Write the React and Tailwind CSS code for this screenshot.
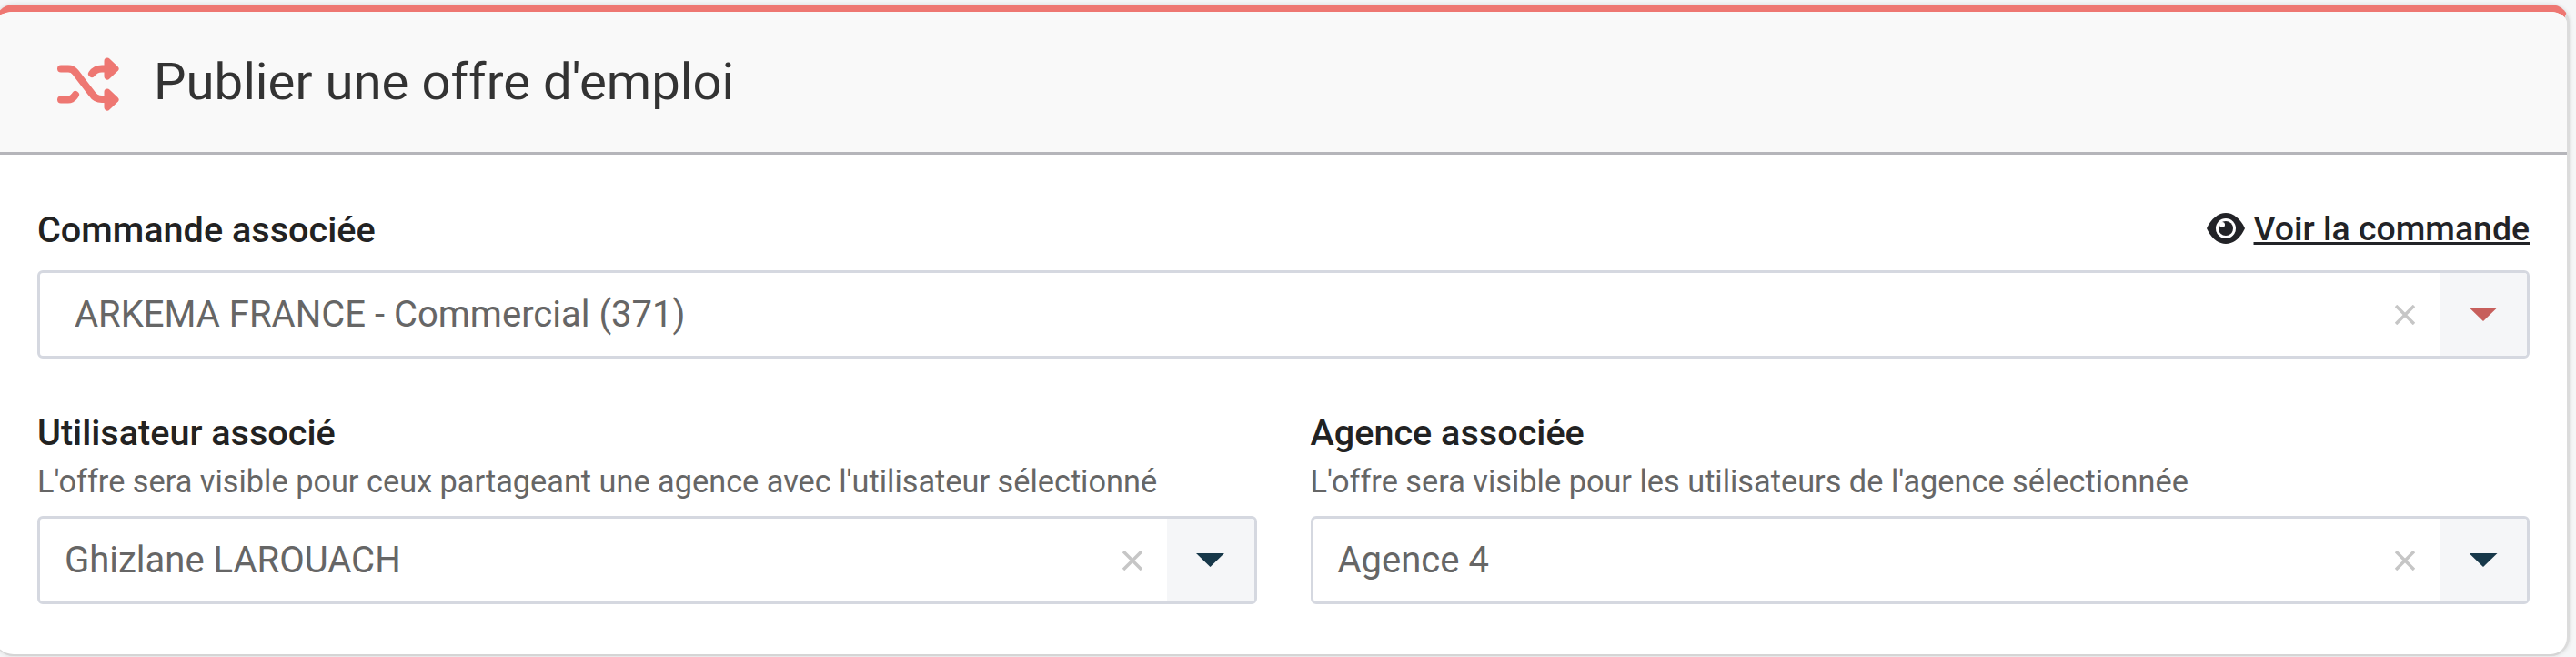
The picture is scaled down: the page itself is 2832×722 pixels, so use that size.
const ShuffleIcon = () => (
  <svg viewBox="32 17 72 66" className="w-[72px] h-[66px] shrink-0" fill="none" stroke="#ee7772" strokeWidth="8" strokeLinecap="round" strokeLinejoin="round">
    <path d="M37 35.5H45Q50 35.5 53 39.5L71 63Q75 69 82 69H88" />
    <path d="M37 69.500H45Q49 69.500 52 65.500L53 64" strokeLinecap="round" />
    <path d="M71 41Q75 35.500 82 35.500H88" />
    <path d="M88 27L97 35.500L88 44Z" fill="#ee7772" strokeWidth="7" />
    <path d="M88 61L97 69.500L88 78Z" fill="#ee7772" strokeWidth="7" />
  </svg>
);

const EyeIcon = () => (
  <svg viewBox="0 0 42 34" className="w-[42px] h-[34px] shrink-0">
    <path d="M0 17C5 6 13 0 21 0S37 6 42 17C37 28 29 34 21 34S5 28 0 17Z" fill="#222327" />
    <circle cx="21" cy="17" r="11" fill="#ffffff" />
    <circle cx="21" cy="17" r="8" fill="#222327" />
    <circle cx="17" cy="13" r="3" fill="#ffffff" />
  </svg>
);

const Select = ({ value, arrow = '#17384a', padText = 'pl-[38px]' }) => (
  <div className="flex h-[97px] border-[3px] border-[#d5d8e0] rounded-[6px] overflow-hidden bg-white">
    <div className={`flex-1 flex items-center ${padText} text-[40px] text-[#666666]`}>{value}</div>
    <div className="w-[78px] flex items-center justify-start pl-[29px]">
      <svg viewBox="0 0 22 22" className="w-[22px] h-[22px]" stroke="#c6c6c6" strokeWidth="3.5">
        <path d="M1 1L21 21M21 1L1 21" />
      </svg>
    </div>
    <div className="w-[96px] bg-[#f5f6f8] flex items-center justify-center">
      <div className="w-[31px] h-[15px]" style={{ background: arrow, clipPath: 'polygon(0 0, 100% 0, 50% 100%)' }} />
    </div>
  </div>
);

const Field = ({ label, hint, value }) => (
  <div className="flex-1 min-w-0">
    <div className="text-[39.6px] leading-[50px] font-medium text-[#222222]">{label}</div>
    <div className="text-[34.3px] leading-[42px] text-[#666666] mt-[7px] mb-[17px]">{hint}</div>
    <Select value={value} padText="pl-[27px]" />
  </div>
);

export default function App() {
  return (
    <div className="h-[722px] bg-[#f5f6f7] pt-[5px] pr-[7px] overflow-hidden" style={{ fontFamily: 'Roboto, sans-serif' }}>
      <div className="h-[716px] -ml-[6px] bg-white rounded-[21px] border-t-[8px] border-t-[#ee7772] border-r-[3px] border-r-[#dcdcdc] border-b-[2px] border-b-[#d5d5d5] overflow-hidden shadow-[0_0_5px_rgba(0,0,0,0.12)]">
        {/* header */}
        <div className="h-[157px] bg-[#f9f9f9] border-b-[3px] border-b-[#b5b5ba] flex items-center pl-[68px] gap-[35px]">
          <ShuffleIcon />
          <h1 className="text-[56.3px] font-normal text-[#333333]">Publier une offre d'emploi</h1>
        </div>

        <div className="pl-[47px] pr-[41px]">
          <div className="pt-[58px] pb-[19px] flex items-center justify-between">
            <span className="text-[39.6px] leading-[50px] font-medium text-[#222222]">Commande associée</span>
            <a className="flex items-center text-[#222327] text-[37.4px] leading-[50px] font-medium -translate-y-[2px]">
              <EyeIcon />
              <span className="underline pl-[10px]">Voir la commande</span>
            </a>
          </div>
          <Select value="ARKEMA FRANCE - Commercial (371)" arrow="#c75f5c" />

          <div className="flex gap-[59px] mt-[57px]">
            <Field
              label="Utilisateur associé"
              hint="L'offre sera visible pour ceux partageant une agence avec l'utilisateur sélectionné"
              value="Ghizlane LAROUACH"
            />
            <Field
              label="Agence associée"
              hint="L'offre sera visible pour les utilisateurs de l'agence sélectionnée"
              value="Agence 4"
            />
          </div>
        </div>
      </div>
    </div>
  );
}
